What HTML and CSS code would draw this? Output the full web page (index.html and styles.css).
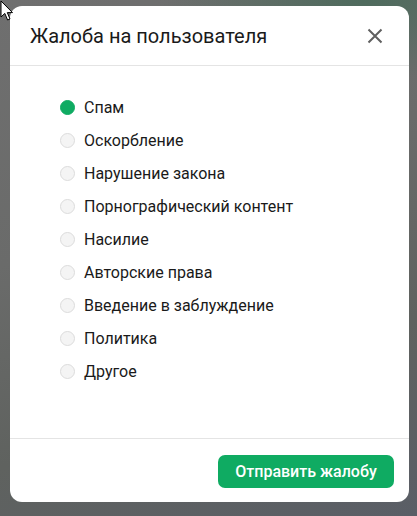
FILE: index.html
```html
<!DOCTYPE html>
<html lang="ru">
<head>
<meta charset="utf-8">
<title>Жалоба на пользователя</title>
<link rel="stylesheet" href="styles.css">
</head>
<body>
<div class="backdrop">
  <div class="modal">
    <div class="modal-header">
      <h2 class="modal-title">Жалоба на пользователя</h2>
      <button class="close-btn" aria-label="Закрыть">
        <svg width="16" height="16" viewBox="0 0 16 16"><path d="M1.5 1.5 L14.5 14.5 M14.5 1.5 L1.5 14.5" stroke="#5f5f5f" stroke-width="2" fill="none"/></svg>
      </button>
    </div>
    <div class="modal-body">
      <label class="option"><span class="radio checked"></span><span class="label">Спам</span></label>
      <label class="option"><span class="radio"></span><span class="label">Оскорбление</span></label>
      <label class="option"><span class="radio"></span><span class="label">Нарушение закона</span></label>
      <label class="option"><span class="radio"></span><span class="label">Порнографический контент</span></label>
      <label class="option"><span class="radio"></span><span class="label">Насилие</span></label>
      <label class="option"><span class="radio"></span><span class="label">Авторские права</span></label>
      <label class="option"><span class="radio"></span><span class="label">Введение в заблуждение</span></label>
      <label class="option"><span class="radio"></span><span class="label">Политика</span></label>
      <label class="option"><span class="radio"></span><span class="label">Другое</span></label>
    </div>
    <div class="modal-footer">
      <button class="submit-btn">Отправить жалобу</button>
    </div>
  </div>
  <svg class="cursor" width="14" height="22" viewBox="0 0 14 22"><path d="M1 1 L1 17 L4.8 13.4 L7.6 20 L10 19 L7.3 12.6 L12.5 12.6 Z" fill="#fff" stroke="#000" stroke-width="1"/></svg>
</div>
</body>
</html>
```

FILE: styles.css
```css
* { box-sizing: border-box; }
html, body { margin: 0; padding: 0; }
body {
  width: 417px;
  height: 516px;
  overflow: hidden;
  font-family: Roboto, "Liberation Sans", Arial, sans-serif;
}
.backdrop {
  position: relative;
  width: 417px;
  height: 516px;
  padding: 6px 0 0 10px;
  background: linear-gradient(160deg, #6f6f6f 0%, #6a6b6a 40%, #5f625f 70%, #5a5e66 100%);
  background-color: #6b6b6b;
}
.backdrop::before {
  content: "";
  position: absolute;
  top: 0; right: 0;
  width: 260px; height: 80px;
  background: radial-gradient(ellipse at 80% 0%, #4e6b5d 0%, rgba(78,107,93,0) 70%);
}
.modal {
  position: relative;
  width: 399px;
  height: 496px;
  background: #fff;
  border-radius: 12px;
  display: flex;
  flex-direction: column;
}
.modal-header {
  height: 60px;
  flex: none;
  display: flex;
  align-items: center;
  justify-content: space-between;
  padding: 0 26px 0 20px;
  border-bottom: 1px solid #e4e4e4;
}
.modal-title {
  margin: 0;
  font-size: 20px;
  font-weight: 400;
  color: #1a1a1a;
  letter-spacing: 0;
}
.close-btn {
  border: 0;
  background: none;
  padding: 0;
  width: 16px;
  height: 16px;
  display: flex;
  cursor: pointer;
}
.modal-body {
  flex: 1;
  padding: 25px 0 0 50px;
  display: flex;
  flex-direction: column;
}
.option {
  height: 33px;
  display: flex;
  align-items: center;
  gap: 9px;
  cursor: pointer;
}
.radio {
  width: 15px;
  height: 15px;
  border-radius: 50%;
  border: 1px solid #dcdcdc;
  background: #f4f4f4;
  flex: none;
}
.radio.checked {
  background: #0fab62;
  border-color: #0fab62;
}
.label {
  font-size: 16px;
  color: #1a1a1a;
}
.modal-footer {
  flex: none;
  border-top: 1px solid #e4e4e4;
  padding: 16px 15px 14px 0;
  display: flex;
  justify-content: flex-end;
}
.submit-btn {
  width: 176px;
  height: 33px;
  border: 0;
  border-radius: 7px;
  background: #0fab62;
  color: #fff;
  font-family: Roboto, "Liberation Sans", Arial, sans-serif;
  font-size: 16px;
  font-weight: 500;
  cursor: pointer;
}
.cursor {
  position: absolute;
  top: 0;
  left: 0;
}
```
